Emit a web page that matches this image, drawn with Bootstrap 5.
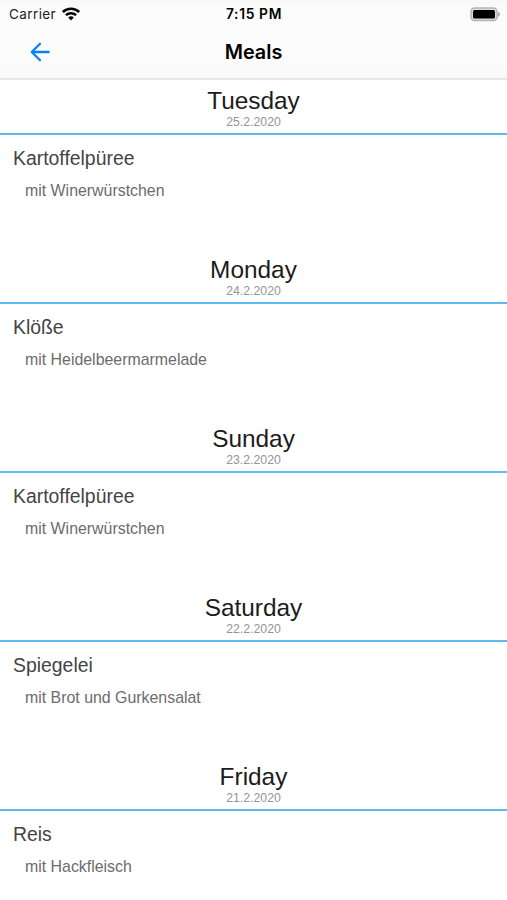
<!DOCTYPE html>
<html lang="en">
<head>
<meta charset="utf-8">
<meta name="viewport" content="width=device-width, initial-scale=1">
<title>Meals</title>
<link href="https://cdn.jsdelivr.net/npm/bootstrap@5.3.0/dist/css/bootstrap.min.css" rel="stylesheet">
<style>
body{font-family:"Liberation Sans",Arial,sans-serif;background:#fff;color:#1c1c1c;height:900px;overflow:hidden}
.app-top{height:80px;background:linear-gradient(#f8f8f8,#fcfcfc 12px,#fcfcfc 60px,#f9f9f9);border-bottom:2px solid #e6e6e6;font-family:Inter,sans-serif;color:#000}
.status-row{height:27px;font-size:13.5px;line-height:27px;display:grid;grid-template-columns:1fr auto 1fr}
.carrier{padding-left:9px;color:#222;letter-spacing:.4px}
.carrier span,.clock{padding-top:1px}
.carrier svg{margin-left:5px;margin-top:-1px}
.clock{letter-spacing:.65px;font-size:13.8px;margin-right:-1px}
.power{padding-right:6px}
.title-row{height:50px;display:grid;grid-template-columns:1fr auto 1fr;align-items:center}
.screen-title{font-size:19.8px;line-height:24px;font-weight:600}
.day{height:169px}
.day-head{height:55px;border-bottom:2px solid #5fbbe9;padding-top:7px}
.day-name{font-size:24.4px;line-height:28px;font-weight:400}
.day-date{font-size:12.3px;line-height:14px;color:#959595}
.dish{font-size:19.4px;line-height:24px;color:#444;padding:11px 13px 0}
.side{font-size:15.9px;line-height:20px;color:#6c6c6c;padding:11px 25px 0}
</style>
</head>
<body>
<header class="app-top">
<div class="status-row">
<div class="carrier d-flex align-items-center"><span>Carrier</span>
<svg width="20" height="14" viewBox="0 0 20 14" fill="none" stroke="#000" stroke-width="2.5"><path d="M1.800 5a11.800 11.800 0 0 1 16.400 0M4.900 8.200a7.400 7.400 0 0 1 10.200 0"/><path d="M7.200 10.600a4.200 4.200 0 0 1 5.600 0L10 13.500z" fill="#000" stroke="none"/></svg></div>
<div class="clock fw-semibold">7:15 PM</div>
<div class="power d-flex align-items-center justify-content-end"><svg width="31" height="15" viewBox="0 0 31 15"><rect x="1" y="1" width="26" height="12.500" rx="3.500" fill="#ddd" stroke="#b5b5b5" stroke-width="1.500"/><rect x="3" y="3" width="22" height="8.500" rx="1.500"/><path d="M28 4.500q4 2.750 0 5.500z" fill="#aaa"/></svg></div>
</div>
<div class="title-row">
<a href="#" class="ps-4 ms-1 d-flex" aria-label="Back"><svg width="24" height="24" viewBox="0 0 24 24" fill="none" stroke="#087fff" stroke-width="2.300" stroke-linecap="round" stroke-linejoin="round"><path d="M20.700 12H4M12 3.800 3.800 12l8.200 8.200"/></svg></a>
<h1 class="screen-title m-0">Meals</h1><span></span>
</div>
</header>
<main>
<section class="day"><div class="day-head text-center"><h2 class="day-name m-0">Tuesday</h2><div class="day-date">25.2.2020</div></div><div class="dish">Kartoffelpüree</div><div class="side">mit Winerwürstchen</div></section>
<section class="day"><div class="day-head text-center"><h2 class="day-name m-0">Monday</h2><div class="day-date">24.2.2020</div></div><div class="dish">Klöße</div><div class="side">mit Heidelbeermarmelade</div></section>
<section class="day"><div class="day-head text-center"><h2 class="day-name m-0">Sunday</h2><div class="day-date">23.2.2020</div></div><div class="dish">Kartoffelpüree</div><div class="side">mit Winerwürstchen</div></section>
<section class="day"><div class="day-head text-center"><h2 class="day-name m-0">Saturday</h2><div class="day-date">22.2.2020</div></div><div class="dish">Spiegelei</div><div class="side">mit Brot und Gurkensalat</div></section>
<section class="day"><div class="day-head text-center"><h2 class="day-name m-0">Friday</h2><div class="day-date">21.2.2020</div></div><div class="dish">Reis</div><div class="side">mit Hackfleisch</div></section>
</main>
<script src="https://cdn.jsdelivr.net/npm/bootstrap@5.3.0/dist/js/bootstrap.bundle.min.js"></script>
</body>
</html>
